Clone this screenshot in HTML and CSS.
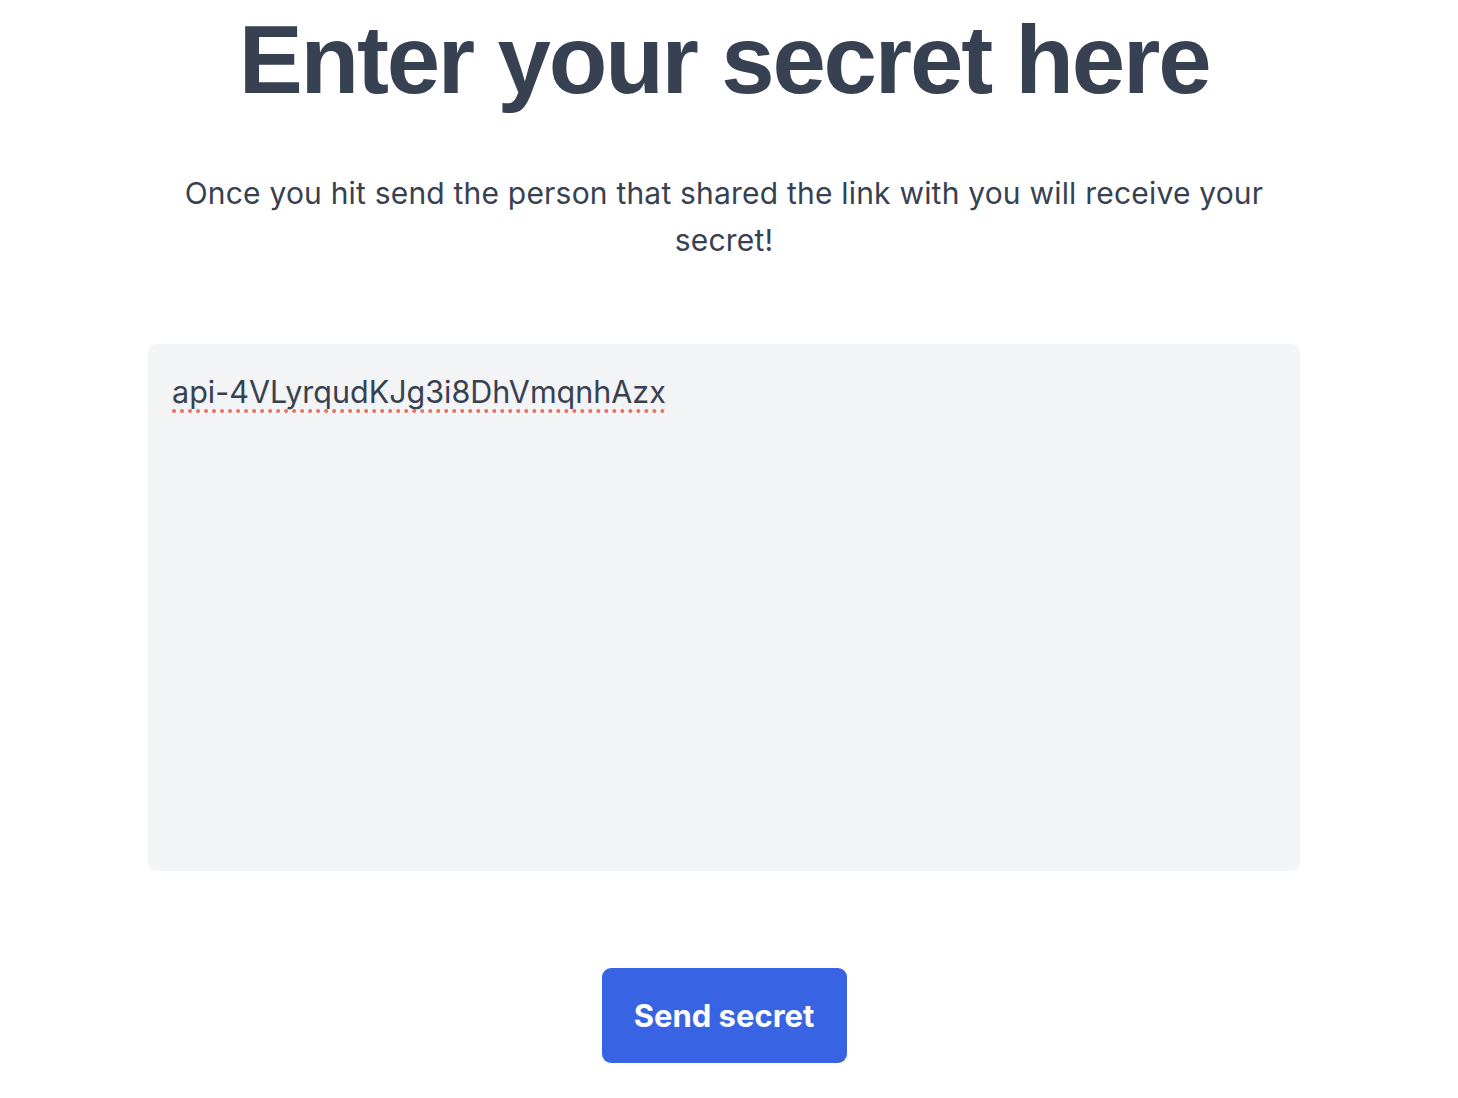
FILE: index.html
```html
<!DOCTYPE html>
<html lang="en">
<head>
<meta charset="utf-8">
<title>Enter your secret here</title>
<link rel="stylesheet" href="styles.css">
</head>
<body>
<main class="page">
  <h1 class="title">Enter your secret here</h1>
  <p class="lead">Once you hit send the person that shared the link with you will receive your secret!</p>
  <div class="field"><span class="misspelt">api-4VLyrqudKJg3i8DhVmqnhAzx</span></div>
  <div class="actions"><button class="send">Send secret</button></div>
</main>
</body>
</html>
```
FILE: styles.css
```css
html, body { margin: 0; padding: 0; background: #ffffff; }
body { font-family: Inter, "Noto Sans", sans-serif; color: #374151; }
.page {
  width: 1152px;
  margin-left: 148px;
  display: flex;
  flex-direction: column;
  align-items: center;
}
.title {
  margin: 8px 0 0;
  font-family: "Liberation Sans", Arial, sans-serif;
  font-weight: 700;
  font-size: 96px;
  line-height: 104px;
  letter-spacing: -2.2px;
  color: #374151;
}
.lead {
  margin: 58px 0 0;
  width: 1130px;
  text-align: center;
  font-size: 30px;
  line-height: 47px;
  letter-spacing: 0.2px;
  color: #374151;
}
.field {
  margin-top: 80px;
  box-sizing: border-box;
  width: 1152px;
  height: 527px;
  background: #f3f4f6;
  border-radius: 9px;
  padding: 28px 24px;
  font-size: 30.5px;
  line-height: 40px;
  color: #374151;
}
.misspelt {
  text-decoration: underline dotted #ef6f61;
  text-decoration-thickness: 4px;
  text-underline-offset: 6px;
  text-decoration-skip-ink: none;
}
.actions { margin-top: 97px; }
.send {
  font-family: Inter, "Noto Sans", sans-serif;
  font-weight: 700;
  font-size: 31px;
  color: #ffffff;
  background: #3864e3;
  border: 0;
  border-radius: 9px;
  width: 245px;
  height: 95px;
  padding: 0;
}
```
